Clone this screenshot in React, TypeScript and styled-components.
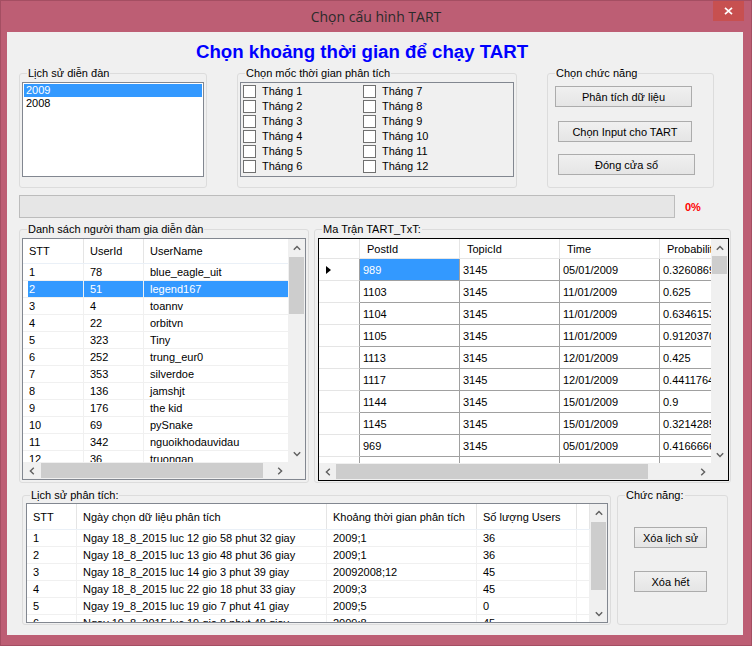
import React from "react";
import styled, { createGlobalStyle } from "styled-components";

const GlobalStyle = createGlobalStyle`
  html, body { margin: 0; padding: 0; }
  body {
    background: #BD5E74;
    font-family: "Liberation Sans", Arial, sans-serif;
    font-size: 11px;
    color: #000;
    overflow: hidden;
  }
  *, *::before, *::after { box-sizing: border-box; }
`;

const Window = styled.div`
  width: 752px;
  height: 646px;
  background: #BD5E74;
  border: 1px solid #A44E62;
  display: flex;
  flex-direction: column;
`;

const TitleBar = styled.div`
  flex: none;
  height: 31px;
  display: grid;
  grid-template-columns: 1fr auto 1fr;
  align-items: center;
`;

const TitleText = styled.div`
  grid-column: 2;
  font-family: "Open Sans", "Noto Sans", sans-serif;
  font-size: 14px;
  line-height: 20px;
  color: #2B2B2B;
  white-space: nowrap;
`;

const CloseButton = styled.div`
  grid-column: 3;
  justify-self: end;
  align-self: start;
  width: 31px;
  height: 20px;
  margin-right: 7px;
  background: #C75050;
  display: flex;
  align-items: center;
  justify-content: center;
`;

const Client = styled.div`
  flex: none;
  height: 603px;
  margin: 0 8px 0 6px;
  background: #F0F0F0;
  display: flex;
  flex-direction: column;
`;

const Heading = styled.h1`
  margin: 9px 0 0;
  padding-right: 26px;
  text-align: center;
  font: bold 18.67px/22px "Liberation Sans", Arial, sans-serif;
  color: #0000FF;
`;

const Row = styled.div<{ $top: number; $left: number; $gap: number }>`
  display: flex;
  align-items: flex-start;
  margin-top: ${(p) => p.$top}px;
  padding-left: ${(p) => p.$left}px;
  gap: ${(p) => p.$gap}px;
`;

const Group = styled.div<{ $w: number; $h: number }>`
  flex: none;
  width: ${(p) => p.$w}px;
  height: ${(p) => p.$h}px;
  border: 1px solid #DCDCDC;
  border-radius: 3px;
  display: flex;
  flex-direction: column;
  align-items: flex-start;
`;

const Caption = styled.div`
  margin: -7px 0 0 7px;
  padding: 0 1px;
  height: 13px;
  line-height: 13px;
  background: #F0F0F0;
  white-space: nowrap;
`;

const ListBox = styled.div`
  margin: 2px 0 0 2px;
  width: 182px;
  height: 95px;
  border: 1px solid #828790;
  background: #fff;
  padding: 1px;
`;

const ListItem = styled.div<{ $selected?: boolean }>`
  height: 13px;
  line-height: 13px;
  padding-left: 2px;
  background: ${(p) => (p.$selected ? "#3399FF" : "transparent")};
  color: ${(p) => (p.$selected ? "#fff" : "#000")};
`;

const CheckPanel = styled.div`
  margin: 2px 0 0 2px;
  width: 274px;
  height: 95px;
  border: 1px solid #828790;
  padding: 2px 0 0 2px;
  display: grid;
  grid-template-columns: 120px 120px;
  grid-template-rows: repeat(6, 13px);
  grid-auto-flow: column;
  row-gap: 2px;
`;

const CheckItem = styled.label`
  display: flex;
  align-items: center;
  gap: 6px;
  height: 13px;
  line-height: 13px;
  white-space: nowrap;
`;

const CheckBox = styled.span`
  flex: none;
  width: 13px;
  height: 13px;
  border: 1px solid #707070;
  background: #fff;
`;

const Button = styled.button<{ $w: number; $ml: number; $mt: number }>`
  flex: none;
  width: ${(p) => p.$w}px;
  height: 21px;
  margin: ${(p) => p.$mt}px 0 0 ${(p) => p.$ml}px;
  padding: 0;
  border: 1px solid #ACACAC;
  background: linear-gradient(#F0F0F0, #E5E5E5);
  font: 11px "Liberation Sans", Arial, sans-serif;
  color: #000;
  white-space: nowrap;
`;

const ProgressRow = styled.div`
  display: flex;
  align-items: center;
  margin-top: 7px;
  padding-left: 12px;
`;

const ProgressBar = styled.div`
  flex: none;
  width: 656px;
  height: 23px;
  border: 1px solid #BCBCBC;
  background: #E6E6E6;
`;

const Percent = styled.span`
  margin-left: 10px;
  color: #FF0000;
  font-weight: bold;
`;

/* ---------- scroll bars ---------- */
const VBar = styled.div`
  background: #F0F0F0;
  display: flex;
  flex-direction: column;
  min-height: 0;
`;

const HBar = styled.div`
  background: #F0F0F0;
  display: flex;
  min-width: 0;
`;

const ArrowBox = styled.div`
  flex: none;
  width: 17px;
  height: 17px;
  display: flex;
  align-items: center;
  justify-content: center;
`;

const VTrack = styled.div`
  flex: 1;
  min-height: 0;
  padding: 0 1px;
`;

const VThumb = styled.div<{ $off: number; $len: number }>`
  margin-top: ${(p) => p.$off}px;
  height: ${(p) => p.$len}px;
  background: #CDCDCD;
`;

const HTrack = styled.div`
  flex: 1;
  min-width: 0;
  padding: 1px 0;
  display: flex;
`;

const HThumb = styled.div<{ $off: number; $len: number }>`
  flex: none;
  margin-left: ${(p) => p.$off}px;
  width: ${(p) => p.$len}px;
  background: #CDCDCD;
`;

const Corner = styled.div`
  background: #F0F0F0;
`;

type Dir = "up" | "down" | "left" | "right";

const Chevron: React.FC<{ dir: Dir }> = ({ dir }) => {
  const vertical = dir === "up" || dir === "down";
  const points = {
    up: "0.8,4.8 4,1.4 7.2,4.8",
    down: "0.8,1.2 4,4.6 7.2,1.2",
    left: "4.8,0.8 1.4,4 4.8,7.2",
    right: "1.2,0.8 4.6,4 1.2,7.2",
  }[dir];
  return (
    <svg width={vertical ? 8 : 6} height={vertical ? 6 : 8} viewBox={vertical ? "0 0 8 6" : "0 0 6 8"}>
      <polyline points={points} fill="none" stroke="#606060" strokeWidth="1.4" />
    </svg>
  );
};

const VScrollBar: React.FC<{ off: number; len: number }> = ({ off, len }) => (
  <VBar>
    <ArrowBox><Chevron dir="up" /></ArrowBox>
    <VTrack><VThumb $off={off} $len={len} /></VTrack>
    <ArrowBox><Chevron dir="down" /></ArrowBox>
  </VBar>
);

const HScrollBar: React.FC<{ off: number; len: number }> = ({ off, len }) => (
  <HBar>
    <ArrowBox><Chevron dir="left" /></ArrowBox>
    <HTrack><HThumb $off={off} $len={len} /></HTrack>
    <ArrowBox><Chevron dir="right" /></ArrowBox>
  </HBar>
);

/* ---------- list view ---------- */
const LVFrame = styled.div<{ $w: number; $h: number; $ml: number; $mt: number; $hscroll: boolean }>`
  flex: none;
  width: ${(p) => p.$w}px;
  height: ${(p) => p.$h}px;
  margin: ${(p) => p.$mt}px 0 0 ${(p) => p.$ml}px;
  border: 1px solid #828790;
  background: #fff;
  display: grid;
  grid-template-columns: minmax(0, 1fr) 17px;
  grid-template-rows: ${(p) => (p.$hscroll ? "minmax(0, 1fr) 17px" : "minmax(0, 1fr)")};
`;

const Viewport = styled.div`
  overflow: hidden;
  min-width: 0;
  min-height: 0;
  background: #fff;
`;

const LVHeader = styled.div<{ $h: number }>`
  display: flex;
  height: ${(p) => p.$h}px;
  border-bottom: 1px solid #EAF0F7;
`;

const LVHeadCell = styled.div<{ $w?: number }>`
  flex: ${(p) => (p.$w ? "none" : "1")};
  width: ${(p) => (p.$w ? `${p.$w}px` : "auto")};
  padding-left: 6px;
  border-right: 1px solid #E5E5E5;
  display: flex;
  align-items: center;
  white-space: nowrap;
  overflow: hidden;
`;

const LVRow = styled.div`
  display: flex;
  height: 17px;
`;

const LVCell = styled.div<{ $w?: number; $sel?: boolean; $first?: boolean }>`
  flex: ${(p) => (p.$w ? "none" : "1")};
  width: ${(p) => (p.$w ? `${p.$w}px` : "auto")};
  height: 17px;
  line-height: 16px;
  padding-left: 6px;
  border-right: 1px solid #F0F0F0;
  border-bottom: 1px solid #F0F0F0;
  white-space: nowrap;
  overflow: hidden;
  color: ${(p) => (p.$sel ? "#fff" : "#000")};
  background: ${(p) =>
    p.$sel ? (p.$first ? "linear-gradient(to right, #fff 5px, #3399FF 5px)" : "#3399FF") : "transparent"};
`;

/* ---------- data grid view ---------- */
const DGFrame = styled.div`
  flex: none;
  width: 411px;
  height: 243px;
  margin: 2px 0 0 3px;
  border: 1px solid #000;
  background: #fff;
  display: grid;
  grid-template-columns: minmax(0, 1fr) 17px;
  grid-template-rows: minmax(0, 1fr) 17px;
`;

const DGHeader = styled.div`
  display: flex;
  height: 20px;
`;

const DGTopLeft = styled.div`
  flex: none;
  width: 41px;
  border-right: 1px solid #E5E5E5;
  border-bottom: 1px solid #E5E5E5;
`;

const DGHeadCell = styled.div`
  flex: none;
  width: 100px;
  padding: 1px 0 0 7px;
  line-height: 18px;
  border-right: 1px solid #E5E5E5;
  border-bottom: 1px solid #E5E5E5;
  white-space: nowrap;
  overflow: hidden;
`;

const DGRow = styled.div`
  display: flex;
  height: 22px;
`;

const DGRowHead = styled.div`
  flex: none;
  width: 41px;
  padding-left: 7px;
  border-right: 1px solid #A0A0A0;
  border-bottom: 1px solid #E5E5E5;
  display: flex;
  align-items: center;
`;

const DGCell = styled.div<{ $sel?: boolean }>`
  flex: none;
  width: 100px;
  padding: 2px 0 0 3px;
  line-height: 19px;
  border-right: 1px solid #A0A0A0;
  border-bottom: 1px solid #A0A0A0;
  white-space: nowrap;
  overflow: hidden;
  background: ${(p) => (p.$sel ? "#3399FF" : "#fff")};
  color: ${(p) => (p.$sel ? "#fff" : "#000")};
`;

/* ---------- data ---------- */
const months = Array.from({ length: 12 }, (_, i) => `Tháng ${i + 1}`);

const users: [string, string, string][] = [
  ["1", "78", "blue_eagle_uit"],
  ["2", "51", "legend167"],
  ["3", "4", "toannv"],
  ["4", "22", "orbitvn"],
  ["5", "323", "Tiny"],
  ["6", "252", "trung_eur0"],
  ["7", "353", "silverdoe"],
  ["8", "136", "jamshjt"],
  ["9", "176", "the kid"],
  ["10", "69", "pySnake"],
  ["11", "342", "nguoikhodauvidau"],
  ["12", "36", "truongan"],
];

const matrix: [string, string, string, string][] = [
  ["989", "3145", "05/01/2009", "0.326086956521739"],
  ["1103", "3145", "11/01/2009", "0.625"],
  ["1104", "3145", "11/01/2009", "0.634615384615385"],
  ["1105", "3145", "11/01/2009", "0.912037037037037"],
  ["1113", "3145", "12/01/2009", "0.425"],
  ["1117", "3145", "12/01/2009", "0.441176470588235"],
  ["1144", "3145", "15/01/2009", "0.9"],
  ["1145", "3145", "15/01/2009", "0.321428571428571"],
  ["969", "3145", "05/01/2009", "0.416666666666667"],
  ["", "", "", ""],
];

const history: [string, string, string, string][] = [
  ["1", "Ngay 18_8_2015 luc 12 gio 58 phut 32 giay", "2009;1", "36"],
  ["2", "Ngay 18_8_2015 luc 13 gio 48 phut 36 giay", "2009;1", "36"],
  ["3", "Ngay 18_8_2015 luc 14 gio 3 phut 39 giay", "20092008;12", "45"],
  ["4", "Ngay 18_8_2015 luc 22 gio 18 phut 33 giay", "2009;3", "45"],
  ["5", "Ngay 19_8_2015 luc 19 gio 7 phut 41 giay", "2009;5", "0"],
  ["6", "Ngay 19_8_2015 luc 19 gio 8 phut 48 giay", "2009;8", "45"],
];

const userCols = [61, 60, 170];
const histCols = [50, 250, 150, 100];

export default function App() {
  return (
    <>
      <GlobalStyle />
      <Window>
        <TitleBar>
          <TitleText>Chọn cấu hình TART</TitleText>
          <CloseButton>
            <svg width="9" height="8" viewBox="0 0 9 8">
              <path d="M1 0.8 L8 7.2 M8 0.8 L1 7.2" stroke="#fff" strokeWidth="1.7" fill="none" />
            </svg>
          </CloseButton>
        </TitleBar>
        <Client>
          <Heading>Chọn khoảng thời gian để chạy TART</Heading>

          <Row $top={10} $left={12} $gap={30}>
            <Group $w={188} $h={115}>
              <Caption>Lịch sử diễn đàn</Caption>
              <ListBox>
                <ListItem $selected>2009</ListItem>
                <ListItem>2008</ListItem>
              </ListBox>
            </Group>
            <Group $w={280} $h={115}>
              <Caption>Chọn mốc thời gian phân tích</Caption>
              <CheckPanel>
                {months.map((m) => (
                  <CheckItem key={m}>
                    <CheckBox />
                    {m}
                  </CheckItem>
                ))}
              </CheckPanel>
            </Group>
            <Group $w={167} $h={115}>
              <Caption>Chọn chức năng</Caption>
              <Button $w={137} $ml={7} $mt={6}>Phân tích dữ liệu</Button>
              <Button $w={134} $ml={10} $mt={14}>Chọn Input cho TART</Button>
              <Button $w={137} $ml={10} $mt={12}>Đóng cửa sổ</Button>
            </Group>
          </Row>

          <ProgressRow>
            <ProgressBar />
            <Percent>0%</Percent>
          </ProgressRow>

          <Row $top={11} $left={12} $gap={5}>
            <Group $w={290} $h={254}>
              <Caption>Danh sách người tham gia diễn đàn</Caption>
              <LVFrame $w={284} $h={242} $ml={2} $mt={2} $hscroll>
                <Viewport>
                  <LVHeader $h={25}>
                    <LVHeadCell $w={userCols[0]}>STT</LVHeadCell>
                    <LVHeadCell $w={userCols[1]}>UserId</LVHeadCell>
                    <LVHeadCell $w={userCols[2]}>UserName</LVHeadCell>
                  </LVHeader>
                  {users.map((u, i) => (
                    <LVRow key={u[0]}>
                      {u.map((v, j) => (
                        <LVCell key={j} $w={userCols[j]} $sel={i === 1} $first={j === 0}>
                          {v}
                        </LVCell>
                      ))}
                      <LVCell $sel={i === 1} />
                    </LVRow>
                  ))}
                </Viewport>
                <VScrollBar off={1} len={57} />
                <HScrollBar off={1} len={222} />
                <Corner />
              </LVFrame>
            </Group>

            <Group $w={417} $h={254}>
              <Caption>Ma Trận TART_TxT:</Caption>
              <DGFrame>
                <Viewport>
                  <DGHeader>
                    <DGTopLeft />
                    <DGHeadCell>PostId</DGHeadCell>
                    <DGHeadCell>TopicId</DGHeadCell>
                    <DGHeadCell>Time</DGHeadCell>
                    <DGHeadCell>Probability</DGHeadCell>
                  </DGHeader>
                  {matrix.map((r, i) => (
                    <DGRow key={i}>
                      <DGRowHead>
                        {i === 0 && (
                          <svg width="5" height="8" viewBox="0 0 5 8">
                            <polygon points="0,0 5,4 0,8" fill="#000" />
                          </svg>
                        )}
                      </DGRowHead>
                      {r.map((v, j) => (
                        <DGCell key={j} $sel={i === 0 && j === 0}>
                          {v}
                        </DGCell>
                      ))}
                    </DGRow>
                  ))}
                </Viewport>
                <VScrollBar off={0} len={18} />
                <HScrollBar off={0} len={312} />
                <Corner />
              </DGFrame>
            </Group>
          </Row>

          <Row $top={12} $left={15} $gap={6}>
            <Group $w={589} $h={130}>
              <Caption>Lịch sử phân tích:</Caption>
              <LVFrame $w={582} $h={120} $ml={3} $mt={1} $hscroll={false}>
                <Viewport>
                  <LVHeader $h={26}>
                    <LVHeadCell $w={histCols[0]}>STT</LVHeadCell>
                    <LVHeadCell $w={histCols[1]}>Ngày chọn dữ liệu phân tích</LVHeadCell>
                    <LVHeadCell $w={histCols[2]}>Khoảng thời gian phân tích</LVHeadCell>
                    <LVHeadCell $w={histCols[3]}>Số lượng Users</LVHeadCell>
                    <LVHeadCell />
                  </LVHeader>
                  {history.map((h) => (
                    <LVRow key={h[0]}>
                      {h.map((v, j) => (
                        <LVCell key={j} $w={histCols[j]}>
                          {v}
                        </LVCell>
                      ))}
                      <LVCell />
                    </LVRow>
                  ))}
                </Viewport>
                <VScrollBar off={1} len={68} />
              </LVFrame>
            </Group>
            <Group $w={111} $h={130}>
              <Caption>Chức năng:</Caption>
              <Button $w={73} $ml={16} $mt={25}>Xóa lịch sử</Button>
              <Button $w={73} $ml={16} $mt={23}>Xóa hết</Button>
            </Group>
          </Row>
        </Client>
      </Window>
    </>
  );
}
